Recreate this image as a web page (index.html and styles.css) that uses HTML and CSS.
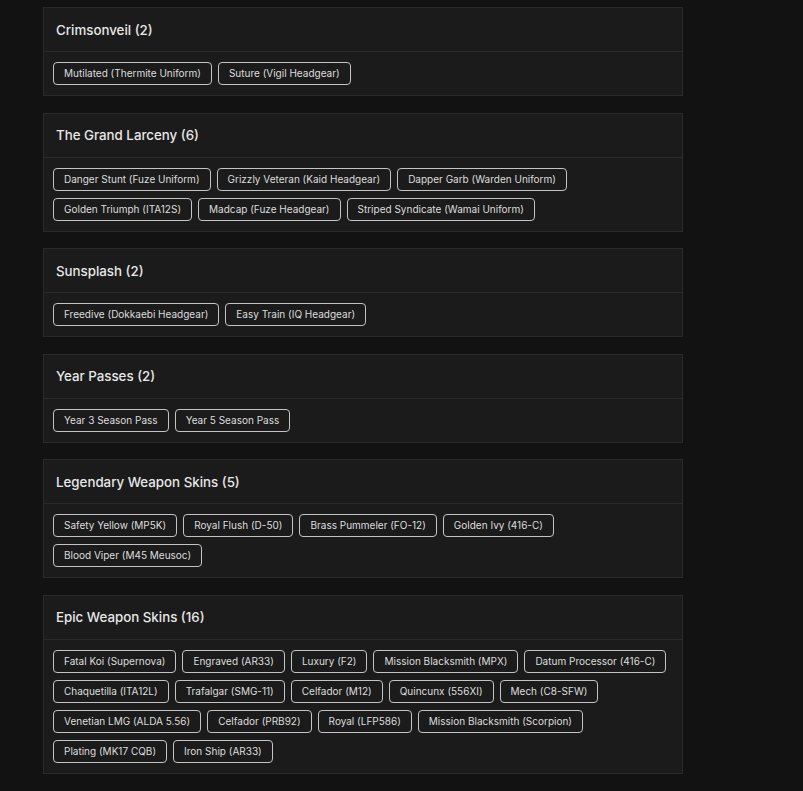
FILE: index.html
```html
<!DOCTYPE html>
<html lang="en">
<head>
    <meta charset="UTF-8">
    <meta name="viewport" content="width=device-width, initial-scale=1.0">
    <title>Bundles</title>
    <link rel="stylesheet" href="styles.css">
</head>
<body>
    <div class="bundle-list">
        <div class="bundle">
            <div class="bundle-title">Crimsonveil (2)</div>
            <div class="bundle-items">
                <span class="item">Mutilated (Thermite Uniform)</span>
                <span class="item">Suture (Vigil Headgear)</span>
            </div>
        </div>
        <div class="bundle">
            <div class="bundle-title">The Grand Larceny (6)</div>
            <div class="bundle-items">
                <span class="item">Danger Stunt (Fuze Uniform)</span>
                <span class="item">Grizzly Veteran (Kaid Headgear)</span>
                <span class="item">Dapper Garb (Warden Uniform)</span>
                <span class="item">Golden Triumph (ITA12S)</span>
                <span class="item">Madcap (Fuze Headgear)</span>
                <span class="item">Striped Syndicate (Wamai Uniform)</span>
            </div>
        </div>
        <div class="bundle">
            <div class="bundle-title">Sunsplash (2)</div>
            <div class="bundle-items">
                <span class="item">Freedive (Dokkaebi Headgear)</span>
                <span class="item">Easy Train (IQ Headgear)</span>
            </div>
        </div>
        <div class="bundle">
            <div class="bundle-title">Year Passes (2)</div>
            <div class="bundle-items">
                <span class="item">Year 3 Season Pass</span>
                <span class="item">Year 5 Season Pass</span>
            </div>
        </div>
        <div class="bundle">
            <div class="bundle-title">Legendary Weapon Skins (5)</div>
            <div class="bundle-items">
                <span class="item">Safety Yellow (MP5K)</span>
                <span class="item">Royal Flush (D-50)</span>
                <span class="item">Brass Pummeler (FO-12)</span>
                <span class="item">Golden Ivy (416-C)</span>
                <span class="item">Blood Viper (M45 Meusoc)</span>
            </div>
        </div>
        <div class="bundle">
            <div class="bundle-title">Epic Weapon Skins (16)</div>
            <div class="bundle-items">
                <span class="item">Fatal Koi (Supernova)</span>
                <span class="item">Engraved (AR33)</span>
                <span class="item">Luxury (F2)</span>
                <span class="item">Mission Blacksmith (MPX)</span>
                <span class="item">Datum Processor (416-C)</span>
                <span class="item">Chaquetilla (ITA12L)</span>
                <span class="item">Trafalgar (SMG-11)</span>
                <span class="item">Celfador (M12)</span>
                <span class="item">Quincunx (556XI)</span>
                <span class="item">Mech (C8-SFW)</span>
                <span class="item">Venetian LMG (ALDA 5.56)</span>
                <span class="item">Celfador (PRB92)</span>
                <span class="item">Royal (LFP586)</span>
                <span class="item">Mission Blacksmith (Scorpion)</span>
                <span class="item">Plating (MK17 CQB)</span>
                <span class="item">Iron Ship (AR33)</span>
            </div>
        </div>
    </div>
</body>
</html>
```

FILE: styles.css
```css
body {
    margin: 0;
    background-color: #121212;
    font-family: Inter, "Open Sans", sans-serif;
    color: #e4e4e4;
}
.bundle-list {
    width: 640px;
    margin-left: 43px;
    padding-top: 7px;
    display: flex;
    flex-direction: column;
    gap: 16.6px;
}
.bundle {
    background-color: #1b1b1b;
    border: 1px solid #2a2a2a;
}
.bundle-title {
    height: 43px;
    padding: 0 12px;
    display: flex;
    align-items: center;
    font-size: 13.3px;
    font-weight: 500;
    color: #e8e8e8;
    border-bottom: 1px solid #2a2a2a;
}
.bundle-items {
    padding: 10px 9px;
    display: flex;
    flex-wrap: wrap;
    gap: 7px 6px;
}
.item {
    height: 23px;
    box-sizing: border-box;
    padding: 0 10px;
    line-height: 21px;
    font-size: 10px;
    color: #dedede;
    border: 1px solid #c4c4c4;
    border-radius: 4px;
}
```
